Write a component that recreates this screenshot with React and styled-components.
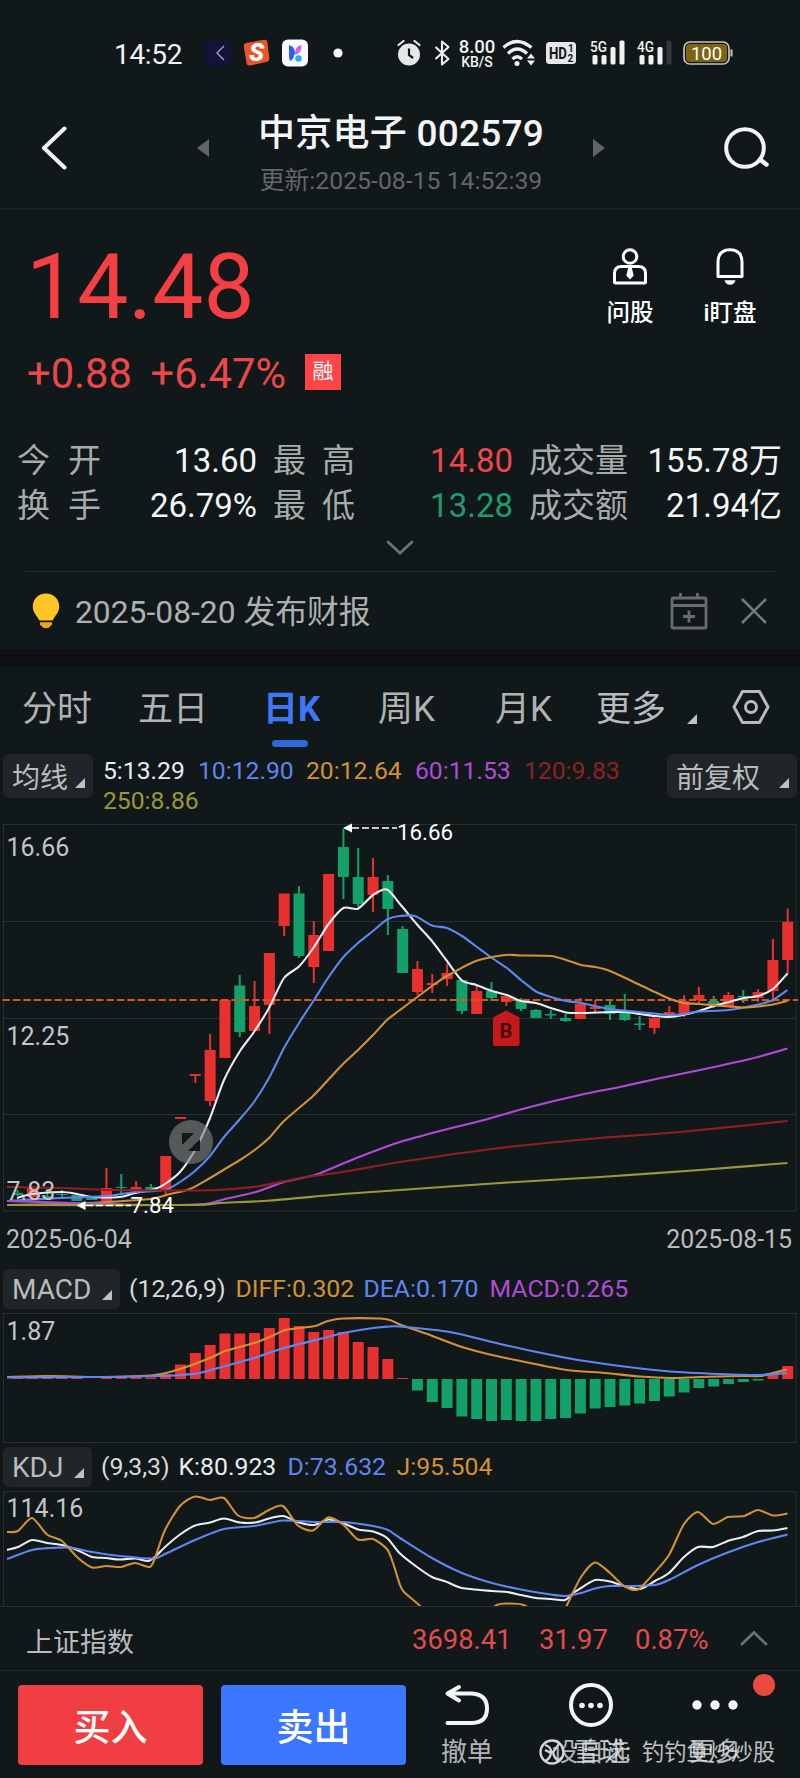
import styled, { createGlobalStyle } from 'styled-components';

const RED = '#e8312f';
const GREEN = '#14a069';
const WHITE = '#e9ebf5';
const BLUE = '#5f86f2';
const ORANGE = '#d29136';
const PURPLE = '#b04bd8';
const DARKRED = '#8e2021';
const OLIVE = '#99983c';
const LINE = '#272f31';

const GlobalStyle = createGlobalStyle`
  * {
    box-sizing: border-box;
  }
  body {
    margin: 0;
    background: #111819;
    font-family: Roboto, 'Noto Sans CJK SC', sans-serif;
    color: #b9bbbc;
  }
  svg {
    display: block;
    flex-shrink: 0;
  }
`;

const Screen = styled.div`
  width: 800px;
  height: 1778px;
  overflow: hidden;
  background: #111819;
  white-space: nowrap;
`;

const StatusBar = styled.div`
  height: 106px;
  display: flex;
  align-items: center;
  padding-left: 114px;
  color: #f2f3f3;
`;

const Clock = styled.div`
  width: 90px;
  padding-top: 2px;
  font-size: 28px;
  letter-spacing: -0.3px;
`;

const StatusItem = styled.div`
  margin-right: ${(p) => p.$gap || 0}px;
`;

const NetSpeed = styled.div`
  width: 40px;
  margin-right: 5px;
  text-align: center;
  font-weight: 500;
  font-size: 18.5px;
  line-height: 18px;
`;

const SpeedUnit = styled.div`
  font-size: 14px;
  line-height: 12px;
`;

const Header = styled.div`
  height: 104px;
  display: flex;
  align-items: center;
  justify-content: space-between;
  padding: 0 30px 18px 41px;
  border-bottom: 2px solid #1b2325;
`;

const HeaderCenter = styled.div`
  display: flex;
  align-items: center;
  justify-content: space-between;
  width: 408px;
  margin-left: 10px;
`;

const TitleBox = styled.div`
  display: flex;
  flex-direction: column;
  align-items: center;
  padding-top: 16px;
`;

const Title = styled.div`
  font-size: 37px;
  line-height: 44px;
  font-weight: 500;
  letter-spacing: 0.25px;
  color: #f3f4f5;
`;

const Subtitle = styled.div`
  margin-top: 5px;
  font-size: 24.8px;
  line-height: 40px;
  color: #626768;
`;

const Quote = styled.div`
  height: 222px;
  display: flex;
  justify-content: space-between;
  padding: 25px 41px 0 26px;
`;

const Price = styled.div`
  font-size: 91px;
  line-height: 104px;
  color: #f43f43;
`;

const ChangeRow = styled.div`
  display: flex;
  align-items: center;
  height: 56px;
  margin-top: 6px;
  padding-left: 1px;
  font-size: 41.7px;
  color: #ee4749;
`;

const Change = styled.span`
  width: ${(p) => p.$w}px;
`;

const Badge = styled.span`
  width: 36px;
  height: 36px;
  margin-top: -3px;
  background: #ff4448;
  color: #fff;
  font-size: 21px;
  line-height: 35px;
  text-align: center;
`;

const QuoteActions = styled.div`
  display: flex;
  gap: 42px;
  padding-top: 12px;
`;

const QuoteAction = styled.div`
  width: 58px;
  display: flex;
  flex-direction: column;
  align-items: center;
  gap: 11px;
  color: #fff;
  font-size: 23.5px;
  line-height: 34px;
  font-weight: 500;
`;

const Stats = styled.div`
  display: grid;
  grid-template-columns: 84px 156px 98px 158px 115px 154px;
  grid-auto-rows: 45px;
  padding: 6px 18px 0 17px;
  font-size: 33px;
  line-height: 45px;
`;

const StatLabel = styled.div`
  display: flex;
  justify-content: space-between;
  padding-left: ${(p) => p.$pad || 0}px;
  color: #a8abac;
`;

const StatValue = styled.div`
  text-align: right;
  color: ${(p) => p.$color || '#f4f5f5'};
`;

const Expander = styled.div`
  height: 43px;
  display: flex;
  justify-content: center;
  padding-top: 12px;
`;

const Notice = styled.div`
  height: 78px;
  margin: 0 25px;
  padding: 0 7px;
  border-top: 1px solid #232b2d;
  display: flex;
  align-items: center;
  font-size: 31.8px;
  color: #adb0b1;
`;

const NoticeText = styled.div`
  flex: 1;
  margin-left: 15px;
  padding-top: 2px;
  line-height: 40px;
`;

const NoticeActions = styled.div`
  display: flex;
  align-items: center;
  gap: 32px;
`;

const Band = styled.div`
  height: 18px;
  background: #101012;
`;

const Tabs = styled.div`
  height: 87px;
  display: flex;
  padding: 15px 0 0 22px;
  font-size: 35px;
  line-height: 56px;
`;

const Tab = styled.div`
  width: ${(p) => p.$w}px;
  color: ${(p) => (p.$active ? '#3f76f6' : '#b0b2b3')};
  font-weight: ${(p) => (p.$active ? 700 : 400)};
`;

const TabBar = styled.div`
  width: 36px;
  height: 7px;
  margin: 2px 0 0 9px;
  border-radius: 4px;
  background: #2f68d8;
`;

const Corner = styled.span`
  width: 0;
  height: 0;
  border-left: 10px solid transparent;
  border-bottom: 10px solid #bfc1c1;
  margin-bottom: ${(p) => p.$mb || 0}px;
`;

const More = styled.div`
  display: flex;
  align-items: flex-end;
  justify-content: space-between;
  width: 101px;
  height: 56px;
  margin-right: 35px;
`;

const MaRow = styled.div`
  height: 70px;
  display: flex;
  align-items: flex-start;
  padding: 0 3px;
`;

const Chip = styled.div`
  width: ${(p) => p.$w}px;
  height: ${(p) => p.$h || 44}px;
  padding: 0 8px 0 9px;
  border-radius: 6px;
  background: #202527;
  display: flex;
  align-items: flex-end;
  justify-content: space-between;
  font-size: 28px;
  flex-shrink: 0;
`;

const ChipText = styled.span`
  line-height: 38px;
`;

const MaValues = styled.div`
  flex: 1;
  display: flex;
  flex-wrap: wrap;
  padding: 2px 40px 0 10px;
  font-size: 24.7px;
  line-height: 29.5px;
`;

const Value = styled.span`
  color: ${(p) => p.$color};
  width: ${(p) => p.$w}px;
  margin-left: ${(p) => p.$ml || 0}px;
`;

const DateRow = styled.div`
  height: 56px;
  display: flex;
  justify-content: space-between;
  padding: 12px 8px 0 6px;
  font-size: 24.9px;
  line-height: 32px;
`;

const IndicatorRow = styled.div`
  height: ${(p) => p.$h}px;
  display: flex;
  align-items: flex-start;
  padding: ${(p) => p.$top}px 3px 0;
  font-size: 24.8px;
  line-height: 40px;
`;

const IndexBar = styled.div`
  height: 65px;
  border-top: 1px solid ${LINE};
  border-bottom: 1px solid #1f2729;
  display: flex;
  align-items: center;
  padding: 3px 32px 0 26px;
  font-size: 27px;
`;

const IndexName = styled.div`
  flex: 1;
`;

const IndexValue = styled.div`
  width: ${(p) => p.$w}px;
  font-size: 27.4px;
  color: #e44b4d;
`;

const BottomBar = styled.div`
  height: 107px;
  display: flex;
  padding: 14px 0 0 18px;
  position: relative;
`;

const TradeButton = styled.button`
  width: 185px;
  height: 80px;
  margin-right: 18px;
  padding: 0 0 1px;
  border: none;
  border-radius: 4px;
  background: ${(p) => p.$bg};
  color: #fff;
  font-family: inherit;
  font-size: 37px;
  font-weight: 500;
`;

const Tool = styled.div`
  width: 124px;
  display: flex;
  flex-direction: column;
  align-items: center;
  font-size: 26px;
  line-height: 34px;
  color: #b3b5b6;
  margin-left: ${(p) => p.$ml || 0}px;
`;

const ToolIcon = styled.div`
  height: 50px;

  svg {
    overflow: visible;
  }
`;

const RedDot = styled.span`
  position: absolute;
  left: 753px;
  top: 3px;
  width: 22px;
  height: 22px;
  border-radius: 50%;
  background: #e84a40;
`;

const Watermark = styled.div`
  position: absolute;
  left: 539px;
  top: 66px;
  display: flex;
  align-items: center;
  font-size: 22.2px;
  line-height: 30px;
  color: rgba(225, 227, 228, 0.85);
`;

const WatermarkSite = styled.span`
  width: 69px;
  margin-left: 8px;
  font-size: 26px;
`;

// x centre of the i-th trading day
const dayX = (i) => 17.6 + i * 14.81;

// spline through the points
const smooth = (pts) => {
  let d = `M${pts[0][0]} ${pts[0][1]}`;
  for (let i = 0; i < pts.length - 1; i++) {
    const p0 = pts[i - 1] || pts[i];
    const p1 = pts[i];
    const p2 = pts[i + 1];
    const p3 = pts[i + 2] || p2;
    d += `C${p1[0] + (p2[0] - p0[0]) / 8} ${p1[1] + (p2[1] - p0[1]) / 8} ${p2[0] - (p3[0] - p1[0]) / 8} ${p2[1] - (p3[1] - p1[1]) / 8} ${p2[0]} ${p2[1]}`;
  }
  return d;
};

// [up, wick top, body top, body bottom, wick bottom]
const candles = [
  [0, 1190, 1193, 1195, 1196], [1, 1186, 1188, 1197, 1199], [0, 1190, 1196, 1198, 1199], [0, 1190, 1194, 1195, 1197],
  [0, 1194, 1195, 1201, 1201], [0, 1196, 1198, 1200, 1200], [1, 1168, 1188, 1201, 1201], [0, 1174, 1187, 1188, 1194],
  [1, 1181, 1187, 1191, 1191], [0, 1184, 1187, 1190, 1190], [1, 1156, 1156, 1191, 1195], [1, 1117, 1117, 1119, 1119],
  [1, 1074, 1074, 1076, 1083], [1, 1034, 1050, 1101, 1106], [1, 1000, 1000, 1058, 1058], [0, 975, 985.5, 1032, 1037],
  [1, 981, 1006, 1031, 1031], [1, 953, 953, 1005, 1034], [1, 893.5, 893.5, 926, 936], [0, 886, 893.5, 956, 958],
  [1, 921, 935, 967, 983], [1, 874, 874, 951, 951], [0, 829, 847, 877, 899], [0, 848, 877, 904, 907],
  [1, 858, 877, 895, 912], [0, 875, 881, 909, 935], [0, 926, 929, 973, 973], [1, 961, 969, 992, 995],
  [1, 974, 983, 985, 993], [1, 964, 973, 979, 986], [0, 980, 980, 1011, 1014], [1, 985, 991, 1014, 1014],
  [0, 982, 991, 998, 1001], [1, 995, 996, 1002, 1006], [0, 998, 1001, 1009, 1011], [0, 1009, 1010, 1018, 1018],
  [0, 1010, 1014, 1015.5, 1019], [0, 1014, 1018, 1021, 1022], [1, 998, 1004, 1019, 1019], [1, 1000, 1007, 1009, 1013],
  [0, 1000, 1005, 1014, 1020], [0, 994, 1012, 1020, 1021], [0, 1016, 1023.5, 1025, 1030], [1, 1016, 1018, 1028, 1034],
  [1, 1006, 1012, 1014, 1016], [1, 995, 1001, 1013, 1017], [1, 987, 995, 1000, 1003], [0, 996, 1001, 1005, 1008],
  [1, 992, 995, 1006, 1007], [0, 990, 996, 997.5, 1003], [1, 989, 992, 998, 1002], [1, 939, 960, 991, 1002],
  [1, 908.5, 922, 960, 974],
];

const ma5 = [[17, 1198], [32, 1194], [62, 1192], [77, 1194], [92, 1197], [120, 1197], [135, 1193], [155, 1189], [165, 1184], [180, 1172], [195, 1150], [210, 1118], [224, 1080], [240, 1051], [254, 1032], [269, 1008], [284, 978], [299, 966.5], [314, 947], [328.6, 924], [343.4, 908], [358, 908.7], [373, 895], [387, 889.5], [400, 904], [417.5, 925], [432, 941], [447, 961], [462, 980.5], [476.5, 985], [492, 991], [507, 995], [521, 1001], [536, 1003], [551, 1008], [566, 1012.5], [581, 1013], [610, 1012], [625, 1012], [640, 1014], [655, 1016], [669, 1017], [683, 1015], [699, 1011], [714, 1006], [729, 1002], [744, 998], [758, 996], [773, 989], [787.5, 973.5]];
const ma10 = [[7, 1201], [60, 1198], [106, 1196], [135, 1192], [155, 1191], [168, 1189], [180, 1182], [195, 1171], [210, 1156], [224, 1137], [240, 1119], [254, 1102], [269, 1078], [284, 1048], [299, 1023], [314, 1000], [328, 978], [343, 957.5], [358, 943], [373, 931], [387, 919.5], [400, 916], [415, 916], [432, 925.5], [447, 928], [462, 936], [477, 947], [492, 958], [507, 968], [521, 980], [536, 991.5], [551, 997], [566, 1001], [581, 1003], [610, 1009], [640, 1012], [669, 1015], [684, 1014], [699, 1011.5], [729, 1010], [758, 1004.5], [773, 1000], [787.5, 990]];
const ma20 = [[7, 1205], [62, 1204], [106, 1202], [150, 1199], [170, 1194], [190, 1189], [210, 1178], [225, 1169], [240, 1160], [256, 1149], [270, 1137], [284, 1121], [313, 1096], [328, 1080], [343, 1064], [358, 1050], [373, 1035], [387, 1020], [400, 1010], [432, 986], [447, 976], [476, 961], [505, 955], [521, 955.5], [551, 956], [566, 960], [581, 965], [595, 967], [610, 971], [640, 985], [669, 998.5], [684, 1003], [699, 1004], [729, 1006.5], [744, 1007.5], [758, 1006.5], [773, 1004.5], [787.5, 1001]];
const ma60 = [[7, 1201], [75, 1203], [150, 1205], [205, 1204], [225, 1199], [256, 1192], [284, 1182], [315, 1175], [343, 1163.5], [372, 1152], [400, 1142], [440, 1131], [480, 1121], [530, 1107], [580, 1095], [620, 1087], [656, 1079], [700, 1070], [750, 1059], [787.5, 1048.5]];
const ma120 = [[7, 1187], [60, 1188], [110, 1190], [190, 1190.5], [225, 1189.5], [260, 1186], [300, 1178], [343, 1172], [400, 1162], [500, 1148], [600, 1138], [680, 1132], [787.5, 1121]];
const ma250 = [[7, 1205], [190, 1205], [220, 1203], [270, 1200.5], [343, 1194], [400, 1190], [500, 1183], [600, 1177], [700, 1170], [787.5, 1163]];

// far end of each MACD bar, the near end is the zero line
const macdBars = [1378, 1376.5, 1376.5, 1377, 1378, 1379, 1377, 1377, 1376.5, 1377.5, 1374, 1364.5, 1353, 1345, 1333.5, 1333.5, 1333, 1328, 1318, 1326, 1332, 1330, 1332, 1342, 1347, 1359, 1378, 1390.5, 1402, 1408, 1416.5, 1419, 1421, 1420, 1421, 1421, 1419, 1418, 1413.5, 1408.5, 1407, 1405.5, 1403.5, 1401, 1396.5, 1392.5, 1388, 1386.5, 1384, 1382, 1380.5, 1375, 1366];
const diff = [[7, 1377], [50, 1376], [100, 1377], [155, 1375], [180, 1369], [210, 1358], [225, 1351], [254, 1343], [270, 1337], [285, 1330], [300, 1328], [315, 1326], [328, 1321], [343, 1318.5], [380, 1318.5], [390, 1320], [400, 1324.5], [430, 1335], [462, 1347], [492, 1355], [530, 1363], [567, 1370], [605, 1373], [640, 1376.5], [670, 1378], [700, 1377], [740, 1376], [760, 1376], [773, 1373], [787, 1369.5]];
const dea = [[7, 1377.5], [100, 1377], [160, 1376], [180, 1375], [200, 1373], [225, 1366], [254, 1358], [284, 1348], [328, 1337], [343, 1333], [373, 1328], [390, 1326.5], [400, 1326.5], [450, 1332], [500, 1344], [567, 1358], [620, 1366], [670, 1371.5], [720, 1374], [760, 1375], [787, 1373]];

const kLine = [[7, 1550], [18, 1547], [32, 1540], [47, 1543], [62, 1545], [77, 1550], [92, 1557], [106, 1558], [120, 1559.5], [135, 1558.5], [148, 1561], [156, 1556], [165, 1547], [180, 1534.5], [195, 1525.5], [210, 1522.5], [224, 1518.5], [240, 1522.5], [255, 1522.5], [269, 1518.5], [283, 1516], [299, 1522.5], [314, 1525], [328, 1519.5], [343, 1523], [358, 1529.5], [373, 1531.5], [387, 1538], [400, 1553.5], [417, 1567], [432, 1577], [447, 1582], [462, 1588], [492, 1591], [507, 1592], [521, 1595], [536, 1598], [551, 1599], [565, 1600], [573, 1593], [581, 1588], [595, 1580], [610, 1581.5], [624, 1586], [640, 1589], [655, 1581], [669, 1573], [684, 1557], [698, 1547], [713, 1547], [729, 1540.5], [743, 1537], [758, 1531], [773, 1530.5], [787.5, 1528]];
const dLine = [[7, 1559], [32, 1550], [50, 1548], [70, 1547.5], [92, 1552], [120, 1556], [154, 1558.5], [165, 1554], [195, 1540], [224, 1529], [254, 1526], [283, 1520.5], [314, 1522], [343, 1522], [373, 1526], [388, 1530], [400, 1538], [432, 1558], [462, 1573], [492, 1583], [521, 1589.5], [551, 1594.5], [565, 1596], [581, 1593], [595, 1588.5], [610, 1586], [630, 1586], [655, 1585], [669, 1580], [698, 1565], [729, 1552], [758, 1542], [787.5, 1534.5]];
const jLine = [[7, 1532], [18, 1531], [32, 1518], [47, 1534.5], [62, 1541], [77, 1557], [92, 1567.5], [106, 1566], [121, 1567], [135, 1563], [150, 1567], [156, 1555], [165, 1530], [180, 1506], [195, 1496.5], [210, 1500], [224, 1498], [238, 1515.5], [254, 1518], [269, 1510], [283, 1506], [298, 1525.5], [313, 1530.5], [328, 1517.5], [343, 1524.5], [358, 1539.5], [373, 1539], [387, 1549], [393, 1563], [400, 1585], [404, 1592], [420, 1606], [435, 1625], [480, 1625], [495, 1606], [508, 1603.5], [526, 1606], [540, 1625], [560, 1620], [567, 1605], [581, 1577], [595, 1562.5], [610, 1573], [624, 1586], [638, 1589.5], [655, 1572], [669, 1555], [684, 1524], [698, 1512], [713, 1524], [728, 1517], [744, 1516], [758, 1510], [773, 1515.5], [787.5, 1513.5]];

function Curve({ pts, color }) {
  return <path d={smooth(pts)} fill="none" stroke={color} strokeWidth="2.1" strokeLinejoin="round" />;
}

function KChart() {
  return (
    <svg width="800" height="388" viewBox="0 824 800 388" overflow="visible">
      <g stroke={LINE} strokeWidth="1" fill="none">
        <rect x="3.5" y="824.5" width="792.5" height="386.5" />
        <path d="M3 921.5H796M3 1018.5H796M3 1114.5H796" />
      </g>
      <text x="6.5" y="856" fontSize="25" fill="#c3c5c5">16.66</text>
      <text x="6.5" y="1045" fontSize="25" fill="#c3c5c5">12.25</text>
      {candles.map(([up, wt, bt, bb, wb], i) => (
        <g key={i} fill={up ? RED : GREEN}>
          <rect x={dayX(i) - 1} y={wt} width="2" height={wb - wt} />
          <rect x={dayX(i) - 5.5} y={bt} width="11" height={bb - bt} />
        </g>
      ))}
      <path d="M2.5 1000H798" stroke="#d4571c" strokeWidth="2" strokeDasharray="7.4 3" />
      <Curve pts={ma5} color={WHITE} />
      <Curve pts={ma10} color={BLUE} />
      <Curve pts={ma20} color={ORANGE} />
      <Curve pts={ma60} color={PURPLE} />
      <Curve pts={ma120} color={DARKRED} />
      <Curve pts={ma250} color={OLIVE} />
      <text x="6.5" y="1200" fontSize="25" fill="#c3c5c5">7.83</text>
      <path d="M352 828H397" stroke="#fff" strokeWidth="1.3" strokeDasharray="7 3" />
      <path d="M343 828l9-4.5v9z" fill="#fff" />
      <text x="397" y="839.5" fontSize="22.3" fill="#fff">16.66</text>
      <path d="M86 1205.5H131" stroke="#fff" strokeWidth="1.3" strokeDasharray="7 3" />
      <path d="M76.5 1205.5l9-4.5v9z" fill="#fff" />
      <text x="130.5" y="1213" fontSize="22.3" fill="#fff">7.84</text>
      <circle cx="191" cy="1142" r="22" fill="rgba(126,130,130,0.62)" />
      <path d="M182 1133h12l-12 12zM200 1151h-12l12-12z" fill="#111819" />
      <path d="M506 1010.5l13.5 7v26.500q0 2-2 2h-22.500q-2 0-2-2v-26.500z" fill="#c5191d" />
      <text x="506" y="1038" fontSize="20" fontWeight="700" textAnchor="middle" fill="#421113">B</text>
    </svg>
  );
}

function MacdChart() {
  return (
    <svg width="800" height="131" viewBox="0 1313 800 131">
      <rect x="3.5" y="1313.5" width="792.5" height="129" stroke={LINE} fill="none" />
      <text x="6.5" y="1339.5" fontSize="25" fill="#c3c5c5">1.87</text>
      {macdBars.map((y, i) => (
        <rect
          key={i}
          x={dayX(i) - 5.5}
          y={Math.min(y, 1379)}
          width="11"
          height={Math.abs(y - 1379)}
          fill={y < 1379 ? RED : GREEN}
        />
      ))}
      <Curve pts={diff} color={ORANGE} />
      <Curve pts={dea} color={BLUE} />
    </svg>
  );
}

function KdjChart() {
  return (
    <svg width="800" height="115" viewBox="0 1491 800 115">
      <path d="M3.5 1606V1491.5H796V1606" stroke={LINE} fill="none" />
      <text x="6.5" y="1517" fontSize="25" fill="#c3c5c5">114.16</text>
      <Curve pts={kLine} color={WHITE} />
      <Curve pts={dLine} color={BLUE} />
      <Curve pts={jLine} color={ORANGE} />
    </svg>
  );
}

function Signal({ label, weak }) {
  return (
    <svg width="36" height="28" viewBox="0 0 36 28" fill="#f0f1f1" overflow="visible">
      <text x="0" y="13" fontSize="15.5" fontWeight="500" textLength="17" lengthAdjust="spacingAndGlyphs">{label}</text>
      <rect x="2.5" y="16" width="5" height="9.5" rx="1.5" />
      <rect x="11.5" y="16" width="5" height="9.5" rx="1.5" />
      <rect x="20.5" y="8" width="5" height="17.5" rx="1.5" />
      <rect x="29.5" y="1.5" width="5" height="24" rx="1.5" fill={weak ? '#35393b' : '#f0f1f1'} />
    </svg>
  );
}

function Status() {
  return (
    <StatusBar>
      <Clock>14:52</Clock>
      <StatusItem $gap={11}>
        <svg width="28" height="28" viewBox="0 0 28 28">
          <rect x="1" y="1" width="26" height="26" rx="5" fill="#12123a" />
          <path d="M20 7l-7 7 7 7" fill="none" stroke="#a9a9bd" strokeWidth="1.3" />
        </svg>
      </StatusItem>
      <StatusItem $gap={12}>
        <svg width="27" height="28" viewBox="0 0 27 28">
          <path d="M3 4L21 .8q3-.5 3.300 2L26.300 19q.4 3-2.300 3.800L7 26.500q-3 .5-3.400-2.300L.8 7.500Q.4 4.500 3 4z" fill="#e7562c" />
          <text x="13.5" y="22" fontSize="25" fontWeight="900" fontStyle="italic" textAnchor="middle" fill="#fff">S</text>
        </svg>
      </StatusItem>
      <StatusItem $gap={25}>
        <svg width="26" height="28" viewBox="0 0 26 28">
          <rect y="0.5" width="26" height="27" rx="6" fill="#fafafc" />
          <path d="M7 6q5.500 1 6 8-1 5-4 8-2-1-2-4z" fill="#2463ee" />
          <path d="M19.500 6q.5 8-6.500 10-.5-9 6.500-10z" fill="#d764e8" />
          <circle cx="16.5" cy="19.5" r="3.300" fill="#25b4ea" />
        </svg>
      </StatusItem>
      <StatusItem $gap={54}>
        <svg width="10" height="28"><circle cx="5" cy="14" r="4.600" fill="#f5f5f5" /></svg>
      </StatusItem>
      <StatusItem $gap={13}>
        <svg width="24" height="28" viewBox="0 0 24 28">
          <circle cx="12" cy="15.500" r="11" fill="#e6e7e7" />
          <path d="M1.500 6l5-4M22.500 6l-5-4" stroke="#e6e7e7" strokeWidth="2.200" strokeLinecap="round" />
          <path d="M12 9.500v6.500l4 3" fill="none" stroke="#111819" strokeWidth="2.200" />
        </svg>
      </StatusItem>
      <StatusItem $gap={6}>
        <svg width="17" height="28" viewBox="0 0 17 28">
          <path d="M1.500 8l13 12-6.500 5.500v-23L14.500 8l-13 12" fill="none" stroke="#eee" strokeWidth="2.100" strokeLinejoin="round" />
        </svg>
      </StatusItem>
      <NetSpeed>
        8.00
        <SpeedUnit>KB/S</SpeedUnit>
      </NetSpeed>
      <StatusItem $gap={10}>
        <svg width="34" height="28" viewBox="0 0 34 28" fill="none" stroke="#f0f1f1" strokeWidth="3.200">
          <path d="M1.500 8.500q13-12 28 0M6 14.500q9-9 19 0M10.500 20q4.500-4.500 9.500 0" />
          <circle cx="15" cy="24.500" r="2.500" fill="#f0f1f1" stroke="none" />
          <path d="M25 19.500l4-5 4 5zM25 21.500l4 5 4-5z" fill="#f0f1f1" stroke="none" />
        </svg>
      </StatusItem>
      <StatusItem $gap={14}>
        <svg width="30" height="24" viewBox="0 0 30 24">
          <rect y="1" width="30" height="22" rx="3.500" fill="#e6e7e7" />
          <g fill="#15191b" fontWeight="700">
            <text x="3" y="18" fontSize="16" textLength="18" lengthAdjust="spacingAndGlyphs">HD</text>
            <text x="22" y="11" fontSize="10">1</text>
            <text x="21.500" y="21" fontSize="10">2</text>
          </g>
        </svg>
      </StatusItem>
      <StatusItem $gap={11}><Signal label="5G" /></StatusItem>
      <StatusItem $gap={10}><Signal label="4G" weak /></StatusItem>
      <svg width="50" height="24" viewBox="0 0 50 24">
        <rect x="1" y="1" width="45" height="22" rx="6" fill="none" stroke="#c9c5b8" strokeWidth="1.700" />
        <rect x="3" y="3" width="41" height="18" rx="4" fill="#7d6314" />
        <path d="M48.500 8.500v7" stroke="#c9c5b8" strokeWidth="2" />
        <text x="23.500" y="18.500" fontSize="18.500" textAnchor="middle" fill="#fff">100</text>
      </svg>
    </StatusBar>
  );
}

const stats = [
  { open: ['今', '开', '13.60'], range: ['最', '高', '14.80', '#ee4749'], deal: ['成交量', '155.78万'] },
  { open: ['换', '手', '26.79%'], range: ['最', '低', '13.28', '#239a6e'], deal: ['成交额', '21.94亿'] },
];

export default function App() {
  return (
    <Screen>
      <GlobalStyle />
      <Status />
      <Header>
        <svg width="27" height="44" viewBox="0 0 27 44">
          <path d="M23.500 2.500L3 22l20.500 19.500" fill="none" stroke="#f2f3f4" strokeWidth="4" strokeLinecap="round" strokeLinejoin="round" />
        </svg>
        <HeaderCenter>
          <svg width="12" height="18"><path d="M12 0v18L0 9z" fill="#5f6465" /></svg>
          <TitleBox>
            <Title>中京电子 002579</Title>
            <Subtitle>更新:2025-08-15 14:52:39</Subtitle>
          </TitleBox>
          <svg width="12" height="18"><path d="M0 0v18l12-9z" fill="#5f6465" /></svg>
        </HeaderCenter>
        <svg width="46" height="42" viewBox="0 0 46 42" fill="none" stroke="#f2f3f4">
          <circle cx="21" cy="21" r="18.800" strokeWidth="4" />
          <path d="M36 32.500l6.500 5" strokeWidth="4.500" strokeLinecap="round" />
        </svg>
      </Header>

      <Quote>
        <div>
          <Price>14.48</Price>
          <ChangeRow>
            <Change $w={123.5}>+0.88</Change>
            <Change $w={154.5}>+6.47%</Change>
            <Badge>融</Badge>
          </ChangeRow>
        </div>
        <QuoteActions>
          <QuoteAction>
            <svg width="36" height="38" viewBox="0 0 36 38" fill="none" stroke="#fff" strokeWidth="3">
              <circle cx="18" cy="9.500" r="6.800" />
              <path d="M2.500 35.500v-9q0-7 7-7h17q7 0 7 7v9q0 .5-1 .5h-29q-1 0-1-.5z" strokeLinejoin="round" />
              <path d="M16.300 20.500h3.400l2 8-3.700 4-3.700-4z" fill="#fff" stroke="none" />
            </svg>
            问股
          </QuoteAction>
          <QuoteAction>
            <svg width="30" height="38" viewBox="0 0 30 38" fill="none" stroke="#fff" strokeWidth="3">
              <path d="M3 29.500V15.500Q3 2.800 15 2.800t12 12.700v14z" strokeLinejoin="round" />
              <path d="M9.500 33.300h11q-1.500 4.500-5.500 4.500t-5.500-4.500z" fill="#fff" stroke="none" />
            </svg>
            i盯盘
          </QuoteAction>
        </QuoteActions>
      </Quote>

      <Stats>
        {stats.map(({ open, range, deal }) => [
          <StatLabel key={open[0]}><span>{open[0]}</span><span>{open[1]}</span></StatLabel>,
          <StatValue key={open[2]}>{open[2]}</StatValue>,
          <StatLabel key={range[1]} $pad={16}><span>{range[0]}</span><span>{range[1]}</span></StatLabel>,
          <StatValue key={range[2]} $color={range[3]}>{range[2]}</StatValue>,
          <StatLabel key={deal[0]} $pad={16}>{deal[0]}</StatLabel>,
          <StatValue key={deal[1]}>{deal[1]}</StatValue>,
        ])}
      </Stats>
      <Expander>
        <svg width="28" height="16" viewBox="0 0 28 16">
          <path d="M2 2l12 11L26 2" fill="none" stroke="#6c7172" strokeWidth="2.800" strokeLinecap="round" />
        </svg>
      </Expander>

      <Notice>
        <svg width="28" height="36" viewBox="0 0 28 36">
          <path d="M14 .5C6 .5.800 6.500.800 13.500c0 6 3.700 8.500 5.700 12.500.5 1 1 1.500 2 1.500h11c1 0 1.500-.5 2-1.500 2-4 5.700-6.500 5.700-12.500C27.200 6.500 22 .5 14 .5z" fill="#ffc524" />
          <path d="M8 29.300h12v2q0 1.200-1.500 1.400-1 2.500-4.500 2.500t-4.500-2.500Q8 32.500 8 31.300z" fill="#f0a422" />
        </svg>
        <NoticeText>2025-08-20 发布财报</NoticeText>
        <NoticeActions>
          <svg width="38" height="38" viewBox="0 0 38 38" fill="none" stroke="#686c6d" strokeWidth="2.800">
            <rect x="2" y="6" width="34" height="30" rx="1.500" />
            <path d="M2 13.500h34M10.500 1v5M27.500 1v5M19 18.500v12M13 24.500h12" />
          </svg>
          <svg width="28" height="28" viewBox="0 0 28 28" fill="none" stroke="#74797a" strokeWidth="2.600">
            <path d="M2 2l24 24M26 2L2 26" />
          </svg>
        </NoticeActions>
      </Notice>

      <Band />

      <Tabs>
        <Tab $w={116}>分时</Tab>
        <Tab $w={125}>五日</Tab>
        <Tab $w={115} $active>
          日K
          <TabBar />
        </Tab>
        <Tab $w={117}>周K</Tab>
        <Tab $w={101}>月K</Tab>
        <More>
          更多
          <Corner $mb={14} />
        </More>
        <svg width="38" height="54" viewBox="0 2 38 54" fill="none" stroke="#b9bbbc" strokeWidth="3">
          <path d="M10.500 11.500h17L36 27l-8.500 15.500h-17L2 27z" strokeLinejoin="round" />
          <circle cx="19" cy="27" r="5.500" />
        </svg>
      </Tabs>

      <MaRow>
        <Chip $w={90}><ChipText>均线</ChipText><Corner $mb={10} /></Chip>
        <MaValues>
          <Value $w={95} $color={WHITE}>5:13.29</Value>
          <Value $w={108} $color={BLUE}>10:12.90</Value>
          <Value $w={109} $color={ORANGE}>20:12.64</Value>
          <Value $w={109} $color={PURPLE}>60:11.53</Value>
          <Value $w={80} $color={DARKRED}>120:9.83</Value>
          <Value $w={110} $color={OLIVE}>250:8.86</Value>
        </MaValues>
        <Chip $w={130}><ChipText>前复权</ChipText><Corner $mb={10} /></Chip>
      </MaRow>

      <KChart />
      <DateRow>
        <span>2025-06-04</span>
        <span>2025-08-15</span>
      </DateRow>

      <IndicatorRow $h={45} $top={1}>
        <Chip $w={117} $h={40}><ChipText>MACD</ChipText><Corner $mb={9} /></Chip>
        <Value $ml={9} $w={106.5} $color="#d9dbdc">(12,26,9)</Value>
        <Value $w={128} $color={ORANGE}>DIFF:0.302</Value>
        <Value $w={126} $color={BLUE}>DEA:0.170</Value>
        <Value $w={140} $color={PURPLE}>MACD:0.265</Value>
      </IndicatorRow>
      <MacdChart />

      <IndicatorRow $h={47} $top={3}>
        <Chip $w={89} $h={40}><ChipText>KDJ</ChipText><Corner $mb={9} /></Chip>
        <Value $ml={9} $w={77.5} $color="#d9dbdc">(9,3,3)</Value>
        <Value $w={109} $color={WHITE}>K:80.923</Value>
        <Value $w={109} $color={BLUE}>D:73.632</Value>
        <Value $w={110} $color={ORANGE}>J:95.504</Value>
      </IndicatorRow>
      <KdjChart />

      <IndexBar>
        <IndexName>上证指数</IndexName>
        <IndexValue $w={127}>3698.41</IndexValue>
        <IndexValue $w={96}>31.97</IndexValue>
        <IndexValue $w={105}>0.87%</IndexValue>
        <svg width="28" height="18" viewBox="0 0 28 18">
          <path d="M2 13L14 1.500 26 13" fill="none" stroke="#6c7172" strokeWidth="2.800" strokeLinecap="round" />
        </svg>
      </IndexBar>

      <BottomBar>
        <TradeButton $bg="#f03e42">买入</TradeButton>
        <TradeButton $bg="#3b78ff">卖出</TradeButton>
        <Tool $ml={-19}>
          <ToolIcon>
            <svg width="46" height="44" viewBox="0 1 46 44" fill="none" stroke="#f4f5f5" strokeWidth="4" strokeLinecap="round" strokeLinejoin="round">
              <path d="M15 3L3.500 9.500 15 16.500M5 9.500h23q15 1 15 15t-15 14.500H3.500" />
            </svg>
          </ToolIcon>
          撤单
        </Tool>
        <Tool>
          <ToolIcon>
            <svg width="46" height="46" viewBox="0 0 46 46">
              <circle cx="23" cy="20" r="20" fill="none" stroke="#f4f5f5" strokeWidth="4" />
              <g fill="#f4f5f5">
                <circle cx="14" cy="20.500" r="2.800" />
                <circle cx="23" cy="20.500" r="2.800" />
                <circle cx="32" cy="20.500" r="2.800" />
              </g>
            </svg>
          </ToolIcon>
          设自选
        </Tool>
        <Tool>
          <ToolIcon>
            <svg width="48" height="44" viewBox="0 0 48 44" fill="#f4f5f5">
              <circle cx="6" cy="20" r="4.700" />
              <circle cx="24" cy="20" r="4.700" />
              <circle cx="42" cy="20" r="4.700" />
            </svg>
          </ToolIcon>
          更多
        </Tool>
        <RedDot />
        <Watermark>
          <svg width="26" height="28" viewBox="0 0 26 28" fill="none" stroke="#d5d7d8" strokeWidth="2.300">
            <circle cx="13" cy="14" r="11.500" />
            <path d="M6 7q7 2 6 8t-6 8M20 6l-6 8q1 7 7 9M12 15l-6-3" />
          </svg>
          <WatermarkSite>雪球:</WatermarkSite>
          钓钓鱼炒炒股
        </Watermark>
      </BottomBar>
    </Screen>
  );
}
